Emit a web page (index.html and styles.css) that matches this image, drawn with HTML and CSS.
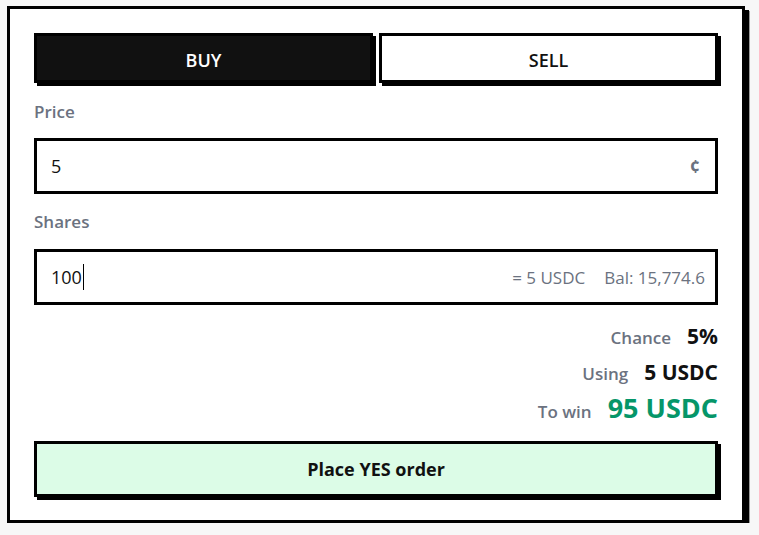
FILE: index.html
```html
<!DOCTYPE html>
<html lang="en">
<head>
<meta charset="utf-8">
<title>Order</title>
<link rel="stylesheet" href="styles.css">
</head>
<body>
<div class="card">
  <div class="tabs">
    <button class="tab tab-active">BUY</button>
    <button class="tab">SELL</button>
  </div>

  <div class="label">Price</div>
  <div class="field field-price">
    <span class="value">5</span>
    <span class="unit">¢</span>
  </div>

  <div class="label label-shares">Shares</div>
  <div class="field field-shares">
    <span class="value">100</span><span class="caret"></span>
    <span class="suffix">
      <span>= 5 USDC</span>
      <span>Bal: 15,774.6</span>
    </span>
  </div>

  <div class="summary">
    <div class="row row-chance"><span class="k">Chance</span><span class="v">5%</span></div>
    <div class="row row-using"><span class="k">Using</span><span class="v">5 USDC</span></div>
    <div class="row row-win"><span class="k">To win</span><span class="v v-win">95 USDC</span></div>
  </div>

  <button class="place">Place YES order</button>
</div>
</body>
</html>
```

FILE: styles.css
```css
* { box-sizing: border-box; }

html, body {
  margin: 0;
  background: #f7f7f7;
}

body {
  padding: 6px 0 0 7px;
  font-family: "Open Sans", "Noto Sans", sans-serif;
  color: #111;
}

.card {
  width: 738px;
  background: #fff;
  border: 3px solid #000;
  box-shadow: 4px 4px 0 #000, 5px 5px 0 #9a9a9a;
  padding: 24px 24px 23px 24px;
  display: flex;
  flex-direction: column;
}

.tabs {
  display: grid;
  grid-template-columns: 1fr 1fr;
  gap: 6px;
  margin-bottom: 16px;
}

.tab {
  height: 50px;
  border: 3px solid #000;
  background: #fff;
  box-shadow: 3px 3px 0 #000;
  font-family: inherit;
  font-size: 18px;
  font-weight: 600;
  color: #111;
  padding: 3px 0 0 0;
}

.tab-active {
  background: #111;
  color: #fff;
}

.label {
  font-size: 17px;
  font-weight: 600;
  color: #6b7280;
  line-height: 26px;
  margin-bottom: 13px;
}

.label-shares {
  margin-bottom: 14px;
}

.field {
  height: 56px;
  border: 3px solid #000;
  display: flex;
  align-items: center;
  padding: 0 15px 0 14px;
  font-size: 18px;
  margin-bottom: 15px;
}

.field-shares {
  padding-right: 10px;
  margin-bottom: 14px;
}

.value {
  color: #111;
}

.caret {
  width: 1px;
  height: 26px;
  background: #000;
  margin-left: 1px;
}

.unit {
  margin-left: auto;
  color: #6b7280;
  font-weight: 700;
}

.suffix {
  margin-left: auto;
  display: flex;
  gap: 19px;
  font-size: 17px;
  color: #6b7280;
}

.summary {
  display: flex;
  flex-direction: column;
  margin-bottom: 12px;
}

.row {
  display: flex;
  justify-content: flex-end;
  align-items: baseline;
  gap: 16px;
  line-height: 34px;
}

.k {
  font-size: 17px;
  font-weight: 600;
  color: #6b7280;
}

.v {
  font-size: 21px;
  font-weight: 700;
  color: #111;
}

.v-win {
  font-size: 27px;
  color: #059669;
}

.place {
  height: 56px;
  border: 3px solid #000;
  background: #dcfce7;
  box-shadow: 3px 3px 0 #000;
  font-family: inherit;
  font-size: 18px;
  font-weight: 700;
  color: #111;
  padding: 0;
}
```
